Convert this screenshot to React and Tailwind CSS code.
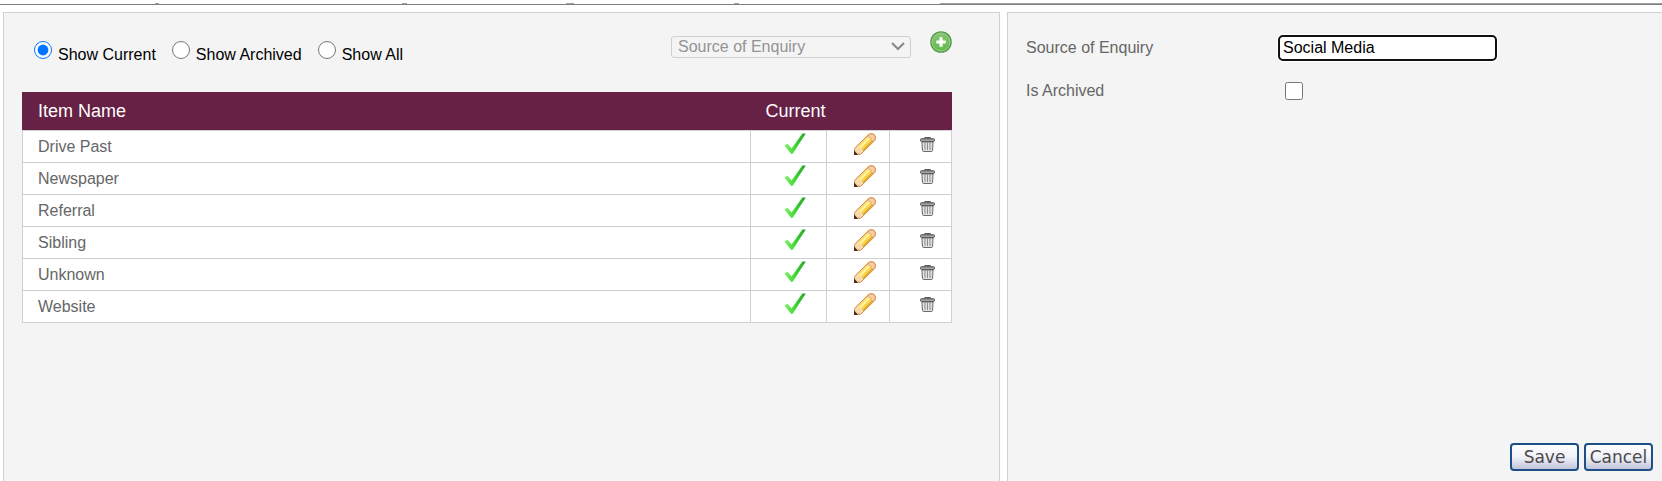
import React, { useState } from 'react';

const ITEMS = ['Drive Past', 'Newspaper', 'Referral', 'Sibling', 'Unknown', 'Website'];

const FILTERS = [
  { value: 'current', label: 'Show Current' },
  { value: 'archived', label: 'Show Archived' },
  { value: 'all', label: 'Show All' },
];

const TickIcon = () => (
  <svg width="22" height="22" viewBox="0 0 22 22" aria-hidden="true">
    <defs>
      <linearGradient id="tick" x1="0" y1="0" x2="1" y2="0">
        <stop offset="0" stopColor="#7df070" />
        <stop offset="0.45" stopColor="#43dd35" />
        <stop offset="1" stopColor="#1f9f1c" />
      </linearGradient>
    </defs>
    <path d="M0.4 12.4 L3.4 10.8 L7.6 15.6 L18.4 0.6 L21.8 0.4 L8.8 20.4 L7.2 21 Z" fill="url(#tick)" />
  </svg>
);

const PencilIcon = () => (
  <svg width="22" height="22" viewBox="0 0 22 22" aria-hidden="true">
    <path d="M0.6 15.4 L14.6 1.4 Q17.6 -0.6 20.4 1.6 Q22.6 4.4 20.8 7.4 L6.8 21.2 L0.6 21.4 Z" fill="#f6d9ac" stroke="#d08b45" strokeWidth="1" />
    <path d="M4.6 12.6 L13.6 3.6 L18.6 8.6 L9.6 17.6 Z" fill="#fbd94a" />
    <path d="M6 14.4 L15.4 5" stroke="#fff6b0" strokeWidth="2" />
    <path d="M8.8 17.4 L18.2 8" stroke="#e2a42c" strokeWidth="1.4" />
    <path d="M13.8 3.4 Q17.4 4.6 18.8 8.6 L20.6 6.8 Q22 4 20.2 2 Q17.8 0.2 15.2 1.8 Z" fill="#f8cfa4" stroke="#dc9a58" strokeWidth="0.7" />
    <path d="M0 17.6 L4.2 21.8 L0 22 Z" fill="#4a2c14" />
  </svg>
);

const BinIcon = () => (
  <svg width="15" height="15" viewBox="0 0 15 15" aria-hidden="true">
    <path d="M5 1.4 V0.6 H10 V1.4" fill="none" stroke="#5c5c5c" strokeWidth="1.2" />
    <rect x="0.5" y="1.7" width="14" height="2.8" rx="1" fill="#a0a0a0" stroke="#555" strokeWidth="1" />
    <path d="M2 5 H13 L12.6 13.2 Q12.5 14.5 11.2 14.5 H3.8 Q2.5 14.5 2.4 13.2 Z" fill="#e2e2e2" stroke="#6a6a6a" strokeWidth="1" />
    <path d="M5 5.5 V13 M7.5 5.5 V13 M10 5.5 V13" stroke="#8c8c8c" strokeWidth="1" />
  </svg>
);

const AddIcon = () => (
  <svg width="22" height="22" viewBox="0 0 21 21" aria-hidden="true">
    <defs>
      <linearGradient id="add" x1="0" y1="0" x2="0" y2="1">
        <stop offset="0" stopColor="#86c474" />
        <stop offset="1" stopColor="#62bb48" />
      </linearGradient>
    </defs>
    <circle cx="10.5" cy="10.5" r="10.3" fill="#549a4a" />
    <circle cx="10.5" cy="10.5" r="8.6" fill="url(#add)" stroke="#9fd490" strokeWidth="0.9" />
    <path d="M10.5 6 V15 M6 10.5 H15" stroke="#fff" strokeWidth="3" />
  </svg>
);

const FormButton = ({ children }) => (
  <button
    type="button"
    className="flex h-7 w-[69px] items-center justify-center rounded-[4px] border-2 border-[#1c4f86] bg-linear-to-b from-white via-[#f1f1f8] to-[#c4c4dc] font-['DejaVu_Sans',sans-serif] text-[17px] leading-5 text-[#4a4a4a]"
  >
    {children}
  </button>
);

// Underside of the tab strip, with the gaps between the tabs
const TabStrip = () => (
  <div className="mt-[3px] border-b border-[#808080]">
    <div className="flex h-px">
      <div className="ml-[155px] w-1 bg-[#a0a0a0]" />
      <div className="ml-[243px] w-[5px] bg-[#a0a0a0]" />
      <div className="ml-[159px] w-2 bg-[#a0a0a0]" />
      <div className="ml-[160px] w-[5px] bg-[#a0a0a0]" />
      <div className="ml-[201px] flex-1 bg-[#a0a0a0]" />
    </div>
  </div>
);

const App = () => {
  const [filter, setFilter] = useState('current');
  const [name, setName] = useState('Social Media');
  const [archived, setArchived] = useState(false);

  return (
    <div className="flex min-h-screen flex-col bg-white font-['Liberation_Sans',Arial,sans-serif] text-base text-[#666]">
      <TabStrip />
      <div className="mt-[7px] ml-[3px] grid flex-1 grid-cols-[997fr_655fr] gap-[7px]">
        <section className="border border-b-0 border-[#d0d0d0] bg-[#f4f4f4] pr-[47px] pl-[18px]">
          <div className="flex h-[79px] items-start justify-between">
            <div className="flex gap-4 pt-7 pl-3 text-black">
              {FILTERS.map((f) => (
                <label key={f.value} className="flex items-start gap-1.5">
                  <input
                    type="radio"
                    name="filter"
                    className="size-[18px]"
                    checked={filter === f.value}
                    onChange={() => setFilter(f.value)}
                  />
                  <span className="pt-1 leading-5">{f.label}</span>
                </label>
              ))}
            </div>
            <div className="flex items-start gap-[19px] pt-[18px]">
              <div className="relative mt-1">
                <select
                  aria-label="List"
                  disabled
                  className="h-[22px] w-60 appearance-none rounded-[3px] border border-[#d0d0d0] bg-[#f4f4f4] pl-1.5 leading-5 text-[#939393]"
                >
                  <option>Source of Enquiry</option>
                </select>
                <svg className="absolute top-[7px] right-1.5" width="14" height="9" viewBox="0 0 14 9" aria-hidden="true">
                  <path d="M1 1 L7 7 L13 1" fill="none" stroke="#8a8a8a" strokeWidth="2.2" />
                </svg>
              </div>
              <button type="button" aria-label="Add">
                <AddIcon />
              </button>
            </div>
          </div>

          <table className="w-full table-fixed border-collapse bg-white">
            <colgroup>
              <col />
              <col className="w-[76px]" />
              <col className="w-[63px]" />
              <col className="w-[62px]" />
            </colgroup>
            <thead>
              <tr className="h-[38px] border-x border-[#672145] bg-[#672145] text-lg leading-5 text-white">
                <th className="pl-[15px] text-left font-normal">Item Name</th>
                <th className="pl-[14px] font-normal">Current</th>
                <th />
                <th />
              </tr>
            </thead>
            <tbody>
              {ITEMS.map((item) => (
                <tr key={item} className="h-8">
                  <td className="border border-[#d0d0d0] pt-0.5 pl-[15px] leading-5">{item}</td>
                  <td className="border border-[#d0d0d0] pb-1 pl-3">
                    <div className="flex justify-center">
                      <TickIcon />
                    </div>
                  </td>
                  <td className="border border-[#d0d0d0] pb-1 pl-[14px]">
                    <button type="button" aria-label={`Edit ${item}`} className="mx-auto block">
                      <PencilIcon />
                    </button>
                  </td>
                  <td className="border border-[#d0d0d0] pb-1 pl-[14px]">
                    <button type="button" aria-label={`Delete ${item}`} className="mx-auto block">
                      <BinIcon />
                    </button>
                  </td>
                </tr>
              ))}
            </tbody>
          </table>
        </section>

        <section className="flex flex-col justify-between border border-r-0 border-b-0 border-[#d0d0d0] bg-[#f4f4f4] pt-[22px] pr-[9px] pb-[10px] pl-[18px]">
          <div className="grid grid-cols-[252px_1fr] items-center gap-y-[18px]">
            <label htmlFor="source">Source of Enquiry</label>
            <input
              id="source"
              type="text"
              value={name}
              onChange={(e) => setName(e.target.value)}
              className="h-[26px] w-[219px] rounded-[5px] border-2 border-[#101010] bg-white pb-px pl-[3px] leading-5 text-black ring-1 ring-white outline-none"
            />
            <label htmlFor="archived">Is Archived</label>
            <input
              id="archived"
              type="checkbox"
              checked={archived}
              onChange={(e) => setArchived(e.target.checked)}
              className="ml-[7px] size-[18px]"
            />
          </div>
          <div className="flex justify-end gap-[5px]">
            <FormButton>Save</FormButton>
            <FormButton>Cancel</FormButton>
          </div>
        </section>
      </div>
    </div>
  );
};

export default App;
